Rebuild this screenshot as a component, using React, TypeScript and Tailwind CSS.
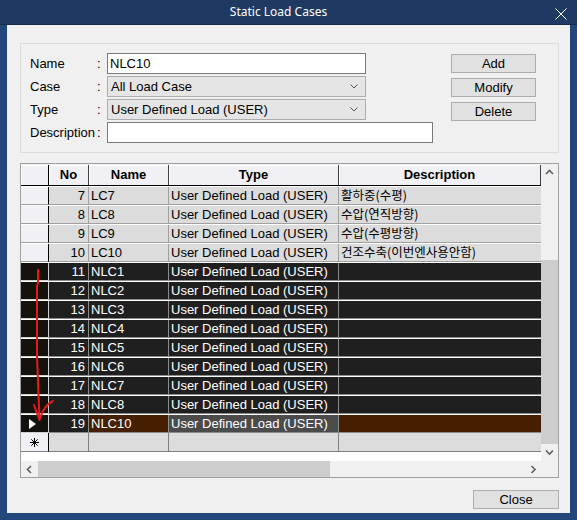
import React from 'react';

type Item = { no: number; name: string; desc: string };

const TYPE = 'User Defined Load (USER)';

const rows: Item[] = [
  { no: 7, name: 'LC7', desc: '활하중(수평)' },
  { no: 8, name: 'LC8', desc: '수압(연직방향)' },
  { no: 9, name: 'LC9', desc: '수압(수평방향)' },
  { no: 10, name: 'LC10', desc: '건조수축(이번엔사용안함)' },
  { no: 11, name: 'NLC1', desc: '' },
  { no: 12, name: 'NLC2', desc: '' },
  { no: 13, name: 'NLC3', desc: '' },
  { no: 14, name: 'NLC4', desc: '' },
  { no: 15, name: 'NLC5', desc: '' },
  { no: 16, name: 'NLC6', desc: '' },
  { no: 17, name: 'NLC7', desc: '' },
  { no: 18, name: 'NLC8', desc: '' },
  { no: 19, name: 'NLC10', desc: '' },
];

function Chevron({ dir, className = '' }: { dir: 'up' | 'down' | 'left' | 'right'; className?: string }) {
  const vertical = dir === 'up' || dir === 'down';
  const pts = {
    up: '1,5 4.5,1.5 8,5',
    down: '1,1.5 4.5,5 8,1.5',
    left: '5,1 1.5,4.5 5,8',
    right: '1.5,1 5,4.5 1.5,8',
  }[dir];
  return (
    <svg
      width={vertical ? 9 : 7}
      height={vertical ? 7 : 9}
      viewBox={vertical ? '0 0 9 7' : '0 0 7 9'}
      className={className}
    >
      <polyline points={pts} fill="none" stroke="#606060" strokeWidth="1.6" />
    </svg>
  );
}

function Dropdown({ value }: { value: string }) {
  return (
    <div className="w-[259px] h-[21px] bg-[#e5e5e5] border border-[#adadad] flex items-center pl-[3px] pr-[7px]">
      <span className="flex-1">{value}</span>
      <svg width="8" height="5" viewBox="0 0 8 5">
        <polyline points="0.5,0.5 4,4 7.5,0.5" fill="none" stroke="#555" strokeWidth="1" />
      </svg>
    </div>
  );
}

function Field({ label, children }: { label: string; children: React.ReactNode }) {
  return (
    <div className="flex items-center h-[21px]">
      <span className="w-[67px]">{label}</span>
      <span className="w-[10px]">:</span>
      {children}
    </div>
  );
}

function Btn({ label, w = 'w-[85px]' }: { label: string; w?: string }) {
  return (
    <div className={`${w} h-[19px] bg-[#e1e1e1] border border-[#adadad] flex items-center justify-center`}>
      {label}
    </div>
  );
}

function GridRow({ item }: { item: Item }) {
  const dark = item.no >= 11;
  const current = item.no === 19;
  const text = dark ? 'text-white' : 'text-black';
  const line = dark ? 'border-[#8c8c8c]' : 'border-[#a0a0a0]';
  const base = dark ? 'bg-[#1f1f1f]' : 'bg-[#dcdcdc]';
  return (
    <div className={`flex h-[19px] pt-[1px] ${text}`}>
      <div
        className={`w-[28px] flex items-center justify-center border-r border-b ${
          dark ? 'bg-[#15110d] border-[#d0d0d0]' : 'bg-[#f0f0f5] border-b-[#a0a0a0] border-r-black'
        }`}
      >
        {current && (
          <svg width="7" height="10" viewBox="0 0 7 10" className="ml-[-4px]">
            <polygon points="0,0 7,5 0,10" fill="#fff" />
          </svg>
        )}
      </div>
      <div className={`w-[40px] flex items-center justify-end pr-[3px] border-r border-b ${line} ${base}`}>
        {item.no}
      </div>
      <div
        className={`w-[80px] flex items-center pl-[2px] border-r border-b ${line} ${
          current ? 'bg-[#461f00]' : base
        }`}
      >
        {item.name}
      </div>
      <div
        className={`w-[170px] flex items-center pl-[2px] border-r border-b ${line} ${
          current ? 'bg-[#4b4b4b]' : base
        }`}
      >
        {TYPE}
      </div>
      <div
        className={`w-[202px] flex items-center pl-[2px] border-b ${line} ${
          current ? 'bg-[#461f00]' : base
        } font-['Noto_Sans_CJK_KR',sans-serif] text-[12.5px]`}
      >
        {item.desc}
      </div>
    </div>
  );
}

function HeadCell({ label, w }: { label: string; w: string }) {
  return (
    <div
      className={`${w} flex items-center justify-center font-bold border-r border-r-[#404040] shadow-[inset_1px_1px_0_#ffffff]`}
    >
      {label}
    </div>
  );
}

export default function App() {
  return (
    <div className="relative w-[577px] h-[520px] bg-[#22477b] flex flex-col font-['Liberation_Sans',Arial,sans-serif] text-[13px] text-black overflow-hidden">
      {/* Title bar */}
      <div className="h-[25px] bg-[#1f3a62] border-b border-[#172c4b] flex items-center relative">
        <span className="flex-1 text-center text-white text-[12px] font-['Noto_Sans',sans-serif] pr-[20px]">
          Static Load Cases
        </span>
        <svg width="12" height="12" viewBox="0 0 12 12" className="absolute right-[10px] top-[8px]">
          <path d="M0.5 0.5 L11.5 11.5 M11.5 0.5 L0.5 11.5" stroke="#fff" strokeWidth="1" />
        </svg>
      </div>

      {/* Body */}
      <div className="flex-1 mx-[7px] mb-[7px] bg-[#f0f0f0] pl-[13px] pt-[18px] flex flex-col">
        {/* Group box */}
        <div className="w-[539px] h-[110px] border border-[#dcdcdc] flex pt-[9px] pl-[9px]">
          <div className="flex flex-col gap-[2px]">
            <Field label="Name">
              <div className="w-[259px] h-[21px] bg-white border border-[#7a7a7a] flex items-center pl-[2px]">NLC10</div>
            </Field>
            <Field label="Case">
              <Dropdown value="All Load Case" />
            </Field>
            <Field label="Type">
              <Dropdown value={TYPE} />
            </Field>
            <Field label="Description">
              <div className="w-[326px] h-[21px] bg-white border border-[#7a7a7a]" />
            </Field>
          </div>
          <div className="ml-[18px] mt-[1px] flex flex-col gap-[5px]">
            <Btn label="Add" />
            <Btn label="Modify" />
            <Btn label="Delete" />
          </div>
        </div>

        {/* Grid */}
        <div className="mt-[10px] w-[539px] h-[315px] border border-[#a0a0a0] bg-white flex flex-col">
          <div className="flex flex-1">
            <div className="w-[520px] flex flex-col">
              <div className="flex h-[22px] pt-[1px] bg-[#f0f0f5] border-b border-black">
                <div className="w-[28px] border-r border-r-black shadow-[inset_1px_1px_0_#ffffff]" />
                <HeadCell label="No" w="w-[40px]" />
                <HeadCell label="Name" w="w-[80px]" />
                <HeadCell label="Type" w="w-[170px]" />
                <HeadCell label="Description" w="w-[202px]" />
              </div>
              {rows.map(r => (
                <GridRow key={r.no} item={r} />
              ))}
              <div className="flex h-[19px]">
                <div className="w-[28px] flex items-center justify-center bg-[#f0f0f5] border-r border-r-black border-b border-b-[#808080]">
                  <svg width="9" height="9" viewBox="0 0 9 9">
                    <path d="M4.5 0 V9 M0 4.5 H9 M1.3 1.3 L7.7 7.7 M7.7 1.3 L1.3 7.7" stroke="#000" strokeWidth="1" />
                  </svg>
                </div>
                <div className="w-[40px] bg-[#dcdcdc] border-r border-b border-[#808080]" />
                <div className="w-[80px] bg-[#dcdcdc] border-r border-b border-[#808080]" />
                <div className="w-[170px] bg-[#dcdcdc] border-r border-b border-[#808080]" />
                <div className="w-[202px] bg-[#dcdcdc] border-b border-[#808080]" />
              </div>
            </div>
            {/* Vertical scrollbar */}
            <div className="flex-1 bg-[#f0f0f0] flex flex-col items-center">
              <div className="h-[17px] flex items-center">
                <Chevron dir="up" />
              </div>
              <div className="h-[79px]" />
              <div className="w-full h-[184px] bg-[#cdcdcd]" />
              <div className="flex-1 flex items-center">
                <Chevron dir="down" />
              </div>
            </div>
          </div>
          {/* Horizontal scrollbar */}
          <div className="h-[16px] flex bg-[#f0f0f0]">
            <div className="w-[17px] flex items-center justify-center">
              <Chevron dir="left" />
            </div>
            <div className="w-[292px] bg-[#cdcdcd]" />
            <div className="w-[196px]" />
            <div className="w-[15px] flex items-center justify-center">
              <Chevron dir="right" />
            </div>
          </div>
        </div>

        <div className="mt-[12px] self-end mr-[11px]">
          <Btn label="Close" w="w-[86px]" />
        </div>
      </div>

      {/* Red annotation arrow */}
      <svg className="absolute inset-0 pointer-events-none" width="577" height="520" viewBox="0 0 577 520">
        <path
          d="M38 270 L38 283 L37 286 L37 357 L39.5 419"
          fill="none"
          stroke="#e41b1b"
          strokeWidth="2"
          strokeLinecap="round"
        />
        <path
          d="M34 405 L39.5 420 L43 411 Q47 404 53 401"
          fill="none"
          stroke="#e41b1b"
          strokeWidth="2"
          strokeLinecap="round"
          strokeLinejoin="round"
        />
      </svg>
    </div>
  );
}
